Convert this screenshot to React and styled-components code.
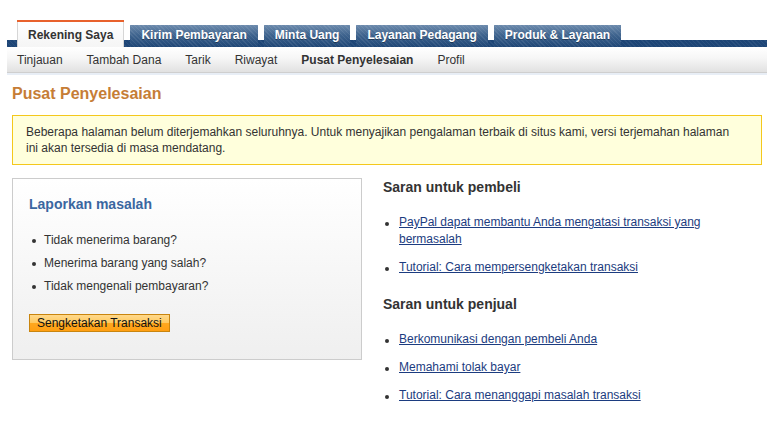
import styled, { createGlobalStyle } from "styled-components";

const GlobalStyle = createGlobalStyle`
  body {
    margin: 0;
    background: #fff;
    font-family: "Liberation Sans", Arial, sans-serif;
    font-size: 12px;
    color: #333;
  }
`;

const tabs = [
  "Rekening Saya",
  "Kirim Pembayaran",
  "Minta Uang",
  "Layanan Pedagang",
  "Produk & Layanan",
];

const subLinks = [
  "Tinjauan",
  "Tambah Dana",
  "Tarik",
  "Riwayat",
  "Pusat Penyelesaian",
  "Profil",
];

const buyerTips = [
  "PayPal dapat membantu Anda mengatasi transaksi yang bermasalah",
  "Tutorial: Cara mempersengketakan transaksi",
];

const sellerTips = [
  "Berkomunikasi dengan pembeli Anda",
  "Memahami tolak bayar",
  "Tutorial: Cara menanggapi masalah transaksi",
];

const problems = [
  "Tidak menerima barang?",
  "Menerima barang yang salah?",
  "Tidak mengenali pembayaran?",
];

export default function App() {
  return (
    <>
      <GlobalStyle />
      <Header>
        <TabRow>
          {tabs.map((t, i) => (
            <Tab key={t} $active={i === 0}>
              {t}
            </Tab>
          ))}
        </TabRow>
        <SubNav>
          {subLinks.map((s) => (
            <SubLink key={s} $current={s === "Pusat Penyelesaian"}>
              {s}
            </SubLink>
          ))}
        </SubNav>
      </Header>

      <Main>
        <Title>Pusat Penyelesaian</Title>
        <Notice>
          Beberapa halaman belum diterjemahkan seluruhnya. Untuk menyajikan
          pengalaman terbaik di situs kami, versi terjemahan halaman ini akan
          tersedia di masa mendatang.
        </Notice>

        <Columns>
          <ReportBox>
            <BoxTitle>Laporkan masalah</BoxTitle>
            <List $indent={3} $gap={7} $lineHeight={16} $bulletGap={8}>
              {problems.map((p) => (
                <li key={p}>{p}</li>
              ))}
            </List>
            <DisputeButton type="button">Sengketakan Transaksi</DisputeButton>
          </ReportBox>

          <Tips>
            <TipHeading>Saran untuk pembeli</TipHeading>
            <List $indent={2} $gap={11} $lineHeight={17} $bulletGap={10}>
              {buyerTips.map((t) => (
                <li key={t}>
                  <TipLink href="#">{t}</TipLink>
                </li>
              ))}
            </List>
            <TipHeading $spaced>Saran untuk penjual</TipHeading>
            <List $indent={2} $gap={11} $lineHeight={17} $bulletGap={10}>
              {sellerTips.map((t) => (
                <li key={t}>
                  <TipLink href="#">{t}</TipLink>
                </li>
              ))}
            </List>
          </Tips>
        </Columns>
      </Main>
    </>
  );
}

const Header = styled.div`
  padding: 20px 2px 0 7px;
`;

const TabRow = styled.div`
  display: flex;
  align-items: flex-end;
  gap: 6px;
  height: 27px;
  padding-left: 10px;
  background:
    repeating-linear-gradient(45deg, rgba(255, 255, 255, 0.06) 0 1px, transparent 1px 3px),
    linear-gradient(to bottom, transparent 0 20px, #1d4576 20px);
`;

const Tab = styled.div`
  box-sizing: border-box;
  display: flex;
  align-items: center;
  padding-left: 11px;
  padding-right: 11px;
  font-weight: bold;
  font-size: 12px;
  white-space: nowrap;
  height: ${(p) => (p.$active ? "27px" : "22px")};
  color: ${(p) => (p.$active ? "#333" : "#fff")};
  border-top: ${(p) => (p.$active ? "2px solid #e8612c" : "none")};
  padding-top: ${(p) => (p.$active ? "1px" : "0")};
  padding-bottom: ${(p) => (p.$active ? "0" : "2px")};
  text-shadow: ${(p) => (p.$active ? "none" : "0 1px 0 rgba(0,0,0,0.35)")};
  background: ${(p) =>
    p.$active
      ? "linear-gradient(to bottom, #ffffff, #f5f5f5)"
      : "repeating-linear-gradient(45deg, rgba(255,255,255,0.08) 0 1px, transparent 1px 3px), linear-gradient(to bottom, #6d8bad 0%, #3f648e 45%, #1f4676 100%)"};
  box-shadow: ${(p) =>
    p.$active ? "inset 1px 0 0 #d6d6d6, inset -1px 0 0 #d6d6d6" : "none"};
`;

const SubNav = styled.div`
  display: flex;
  align-items: center;
  gap: 24px;
  height: 25px;
  padding-left: 10px;
  background: linear-gradient(to bottom, #ffffff 0%, #f6f6f6 45%, #e1e1e1 100%);
  border-bottom: 1px solid #cfcfcf;
  box-shadow: 0 2px 0 #e8eef6;
`;

const SubLink = styled.span`
  font-size: 12px;
  color: #333;
  font-weight: ${(p) => (p.$current ? "bold" : "normal")};
`;

const Main = styled.div`
  padding: 11px 7px 0 12px;
`;

const Title = styled.h1`
  margin: 0 0 11px;
  font-size: 16px;
  line-height: 20px;
  font-weight: bold;
  color: #c67d36;
`;

const Notice = styled.div`
  border: 1px solid #f4c81c;
  background: #ffffdc;
  padding: 8px 30px 8px 13px;
  line-height: 16px;
  font-size: 12px;
  color: #333;
`;

const Columns = styled.div`
  display: flex;
  align-items: flex-start;
  gap: 21px;
  margin-top: 13px;
`;

const ReportBox = styled.div`
  box-sizing: border-box;
  width: 350px;
  flex-shrink: 0;
  border: 1px solid #cccccc;
  background: linear-gradient(to bottom, #ffffff, #efefef);
  padding: 17px 16px 27px;
`;

const BoxTitle = styled.h2`
  margin: 0 0 19px;
  font-size: 14px;
  line-height: 17px;
  font-weight: bold;
  color: #3a66a0;
`;

const List = styled.ul`
  list-style: none;
  margin: 0;
  padding: 0 0 0 ${(p) => p.$indent}px;

  li {
    display: flex;
    line-height: ${(p) => p.$lineHeight}px;
    margin-bottom: ${(p) => p.$gap}px;
  }

  li:last-child {
    margin-bottom: 0;
  }

  li::before {
    content: "";
    flex-shrink: 0;
    width: 4px;
    height: 4px;
    border-radius: 50%;
    background: #333;
    margin-top: ${(p) => Math.round(p.$lineHeight / 2) - 1}px;
    margin-right: ${(p) => p.$bulletGap}px;
  }
`;

const DisputeButton = styled.button`
  display: block;
  margin-top: 20px;
  height: 18px;
  padding: 0 7px;
  border: 1px solid #c9850f;
  background: linear-gradient(to bottom, #ffd98c 0%, #ffc95e 50%, #ffa81f 50%, #ff9f12 100%);
  font-family: "Liberation Sans", Arial, sans-serif;
  font-size: 12px;
  line-height: 16px;
  color: #111;
  cursor: pointer;
`;

const Tips = styled.div`
  flex: 1;
  padding-top: 1px;
`;

const TipHeading = styled.h3`
  margin: ${(p) => (p.$spaced ? "20px" : "0")} 0 18px;
  font-size: 14px;
  line-height: 17px;
  font-weight: bold;
  color: #333;
`;

const TipLink = styled.a`
  color: #1c3c80;
  text-decoration: underline;
`;
